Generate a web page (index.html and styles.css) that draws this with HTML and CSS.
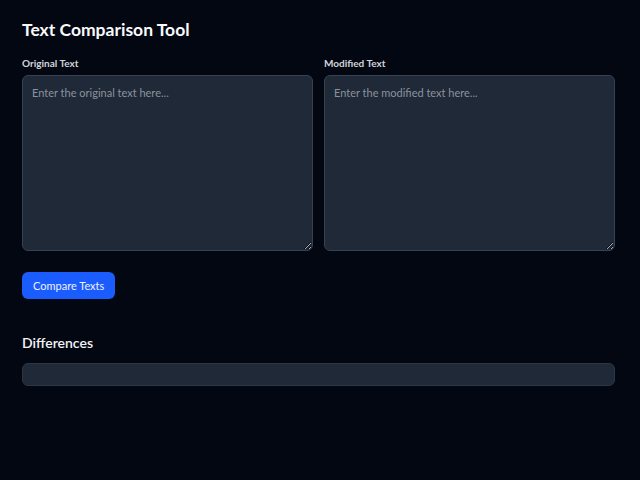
FILE: index.html
```html
<!DOCTYPE html>
<html lang="en">
<head>
<meta charset="utf-8">
<link rel="stylesheet" href="styles.css">
<title>Text Comparison Tool</title>
</head>
<body>
<main class="app">
  <h1 class="title">Text Comparison Tool</h1>
  <div class="inputs">
    <label class="field">
      <span class="label">Original Text</span>
      <textarea class="area" placeholder="Enter the original text here..."></textarea>
    </label>
    <label class="field">
      <span class="label">Modified Text</span>
      <textarea class="area" placeholder="Enter the modified text here..."></textarea>
    </label>
  </div>
  <button class="btn" type="button">Compare Texts</button>
  <h2 class="subtitle">Differences</h2>
  <div class="result"></div>
</main>
</body>
</html>
```
FILE: styles.css
```css
html, body {
  margin: 0;
  background: #030712;
  color: #f3f4f6;
  font-family: Lato, "Noto Sans", sans-serif;
}
.app {
  padding: 18px 25px 20px 22px;
  display: flex;
  flex-direction: column;
  align-items: flex-start;
}
.title {
  margin: 0 0 14px;
  font-size: 17.5px;
  font-weight: 700;
  line-height: 24px;
  color: #f9fafb;
}
.inputs {
  display: grid;
  grid-template-columns: 1fr 1fr;
  gap: 11px;
  width: 100%;
}
.field {
  display: flex;
  flex-direction: column;
}
.label {
  font-size: 10px;
  font-weight: 700;
  line-height: 14px;
  color: #d1d5db;
  margin-bottom: 5px;
}
.area {
  box-sizing: border-box;
  height: 176px;
  width: 100%;
  background: #1f2937;
  border: 1px solid #374151;
  border-radius: 6px;
  padding: 9px 9px;
  color: #f3f4f6;
  font-family: inherit;
  font-size: 11px;
  line-height: 16px;
  resize: vertical;
  outline: none;
}
.area::placeholder {
  color: #8b929d;
}
.btn {
  margin-top: 21px;
  height: 27px;
  padding: 0 11px;
  background: #1b5cff;
  color: #eef2ff;
  border: none;
  border-radius: 6px;
  font-family: inherit;
  font-size: 11px;
}
.subtitle {
  margin: 34px 0 10px;
  font-size: 14px;
  font-weight: 600;
  line-height: 20px;
  color: #f3f4f6;
}
.result {
  box-sizing: border-box;
  width: 100%;
  height: 23px;
  background: #1f2937;
  border: 1px solid #2b3544;
  border-radius: 6px;
}
```
